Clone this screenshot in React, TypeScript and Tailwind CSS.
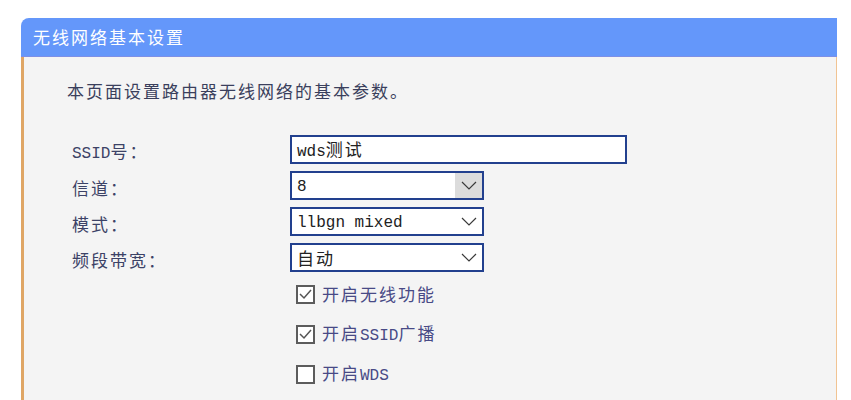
import React from "react";

function T({ s, className = "" }: { s: string; className?: string }) {
  const runs: { a: boolean; t: string }[] = [];
  for (const ch of s) {
    const a = ch.charCodeAt(0) < 128;
    const last = runs[runs.length - 1];
    if (last && last.a === a) last.t += ch;
    else runs.push({ a, t: ch });
  }
  return (
    <span className={className}>
      {runs.map((r, i) =>
        r.a ? (
          <span key={i} className="font-['Liberation_Mono',monospace] text-[16px] whitespace-pre">
            {r.t}
          </span>
        ) : (
          <span key={i} className="font-['Noto_Sans_CJK_SC',sans-serif] text-[17px] tracking-[2px]">
            {r.t}
          </span>
        )
      )}
    </span>
  );
}

function Chevron() {
  return (
    <svg width="16" height="9" viewBox="0 0 16 9" fill="none">
      <polyline points="1,1 8,8 15,1" stroke="#3a3a3a" strokeWidth="1.2" />
    </svg>
  );
}

function Select({ value, hover }: { value: string; hover?: boolean }) {
  return (
    <div className="flex h-[29px] w-[194px] items-stretch border-2 border-[#22408e] bg-white">
      <div className="flex flex-1 items-center pl-[5px] text-[#222] leading-none">
        <T s={value} />
      </div>
      <div className={`flex w-[27px] items-center justify-center ${hover ? "bg-[#dcdcdc]" : ""}`}>
        <Chevron />
      </div>
    </div>
  );
}

function Check({ checked, label }: { checked: boolean; label: string }) {
  return (
    <div className="flex h-[40px] items-center pl-[6px]">
      <div className="flex h-[19px] w-[19px] items-center justify-center border-2 border-[#5c5c5c] bg-white">
        {checked && (
          <svg width="15" height="15" viewBox="0 0 15 15" fill="none">
            <polyline points="2,7 6,11 13,3" stroke="#555" strokeWidth="1.5" />
          </svg>
        )}
      </div>
      <div className="ml-[7px] text-[#484a86] leading-none">
        <T s={label} />
      </div>
    </div>
  );
}

export default function App() {
  const labels = ["SSID号：", "信道：", "模式：", "频段带宽："];
  return (
    <div className="min-h-[400px] bg-white pt-[18px] pl-[21px]">
      <div className="w-[816px]">
        <div className="flex h-[39px] items-center rounded-tl-[8px] border-b border-[#7d8fe6] bg-[#6497fa] pl-[12px] text-white leading-none">
          <T s="无线网络基本设置" />
        </div>
        <div className="h-[343px] border-l-[3px] border-r border-l-[#dfa665] border-r-[#f1c493] bg-[#f4f4f4] pt-[22px]">
          <div className="flex h-[24px] items-center pl-[43px] text-[#3a3f5c] leading-none">
            <T s="本页面设置路由器无线网络的基本参数。" />
          </div>
          <div className="mt-[32px] flex pl-[48px]">
            <div className="flex w-[218px] flex-col gap-[7px] text-[#3c4266]">
              {labels.map((l) => (
                <div key={l} className="flex h-[29px] items-center pt-[4px] leading-none">
                  <T s={l} />
                </div>
              ))}
            </div>
            <div className="flex flex-col">
              <div className="flex flex-col gap-[7px]">
                <div className="flex h-[29px] w-[337px] items-center border-2 border-[#22408e] bg-white pl-[5px] text-[#222] leading-none">
                  <T s="wds测试" />
                </div>
                <Select value="8" hover />
                <Select value="llbgn mixed" />
                <Select value="自动" />
              </div>
              <div className="mt-[2px]">
                <Check checked label="开启无线功能" />
                <Check checked label="开启SSID广播" />
                <Check checked={false} label="开启WDS" />
              </div>
            </div>
          </div>
        </div>
      </div>
    </div>
  );
}
